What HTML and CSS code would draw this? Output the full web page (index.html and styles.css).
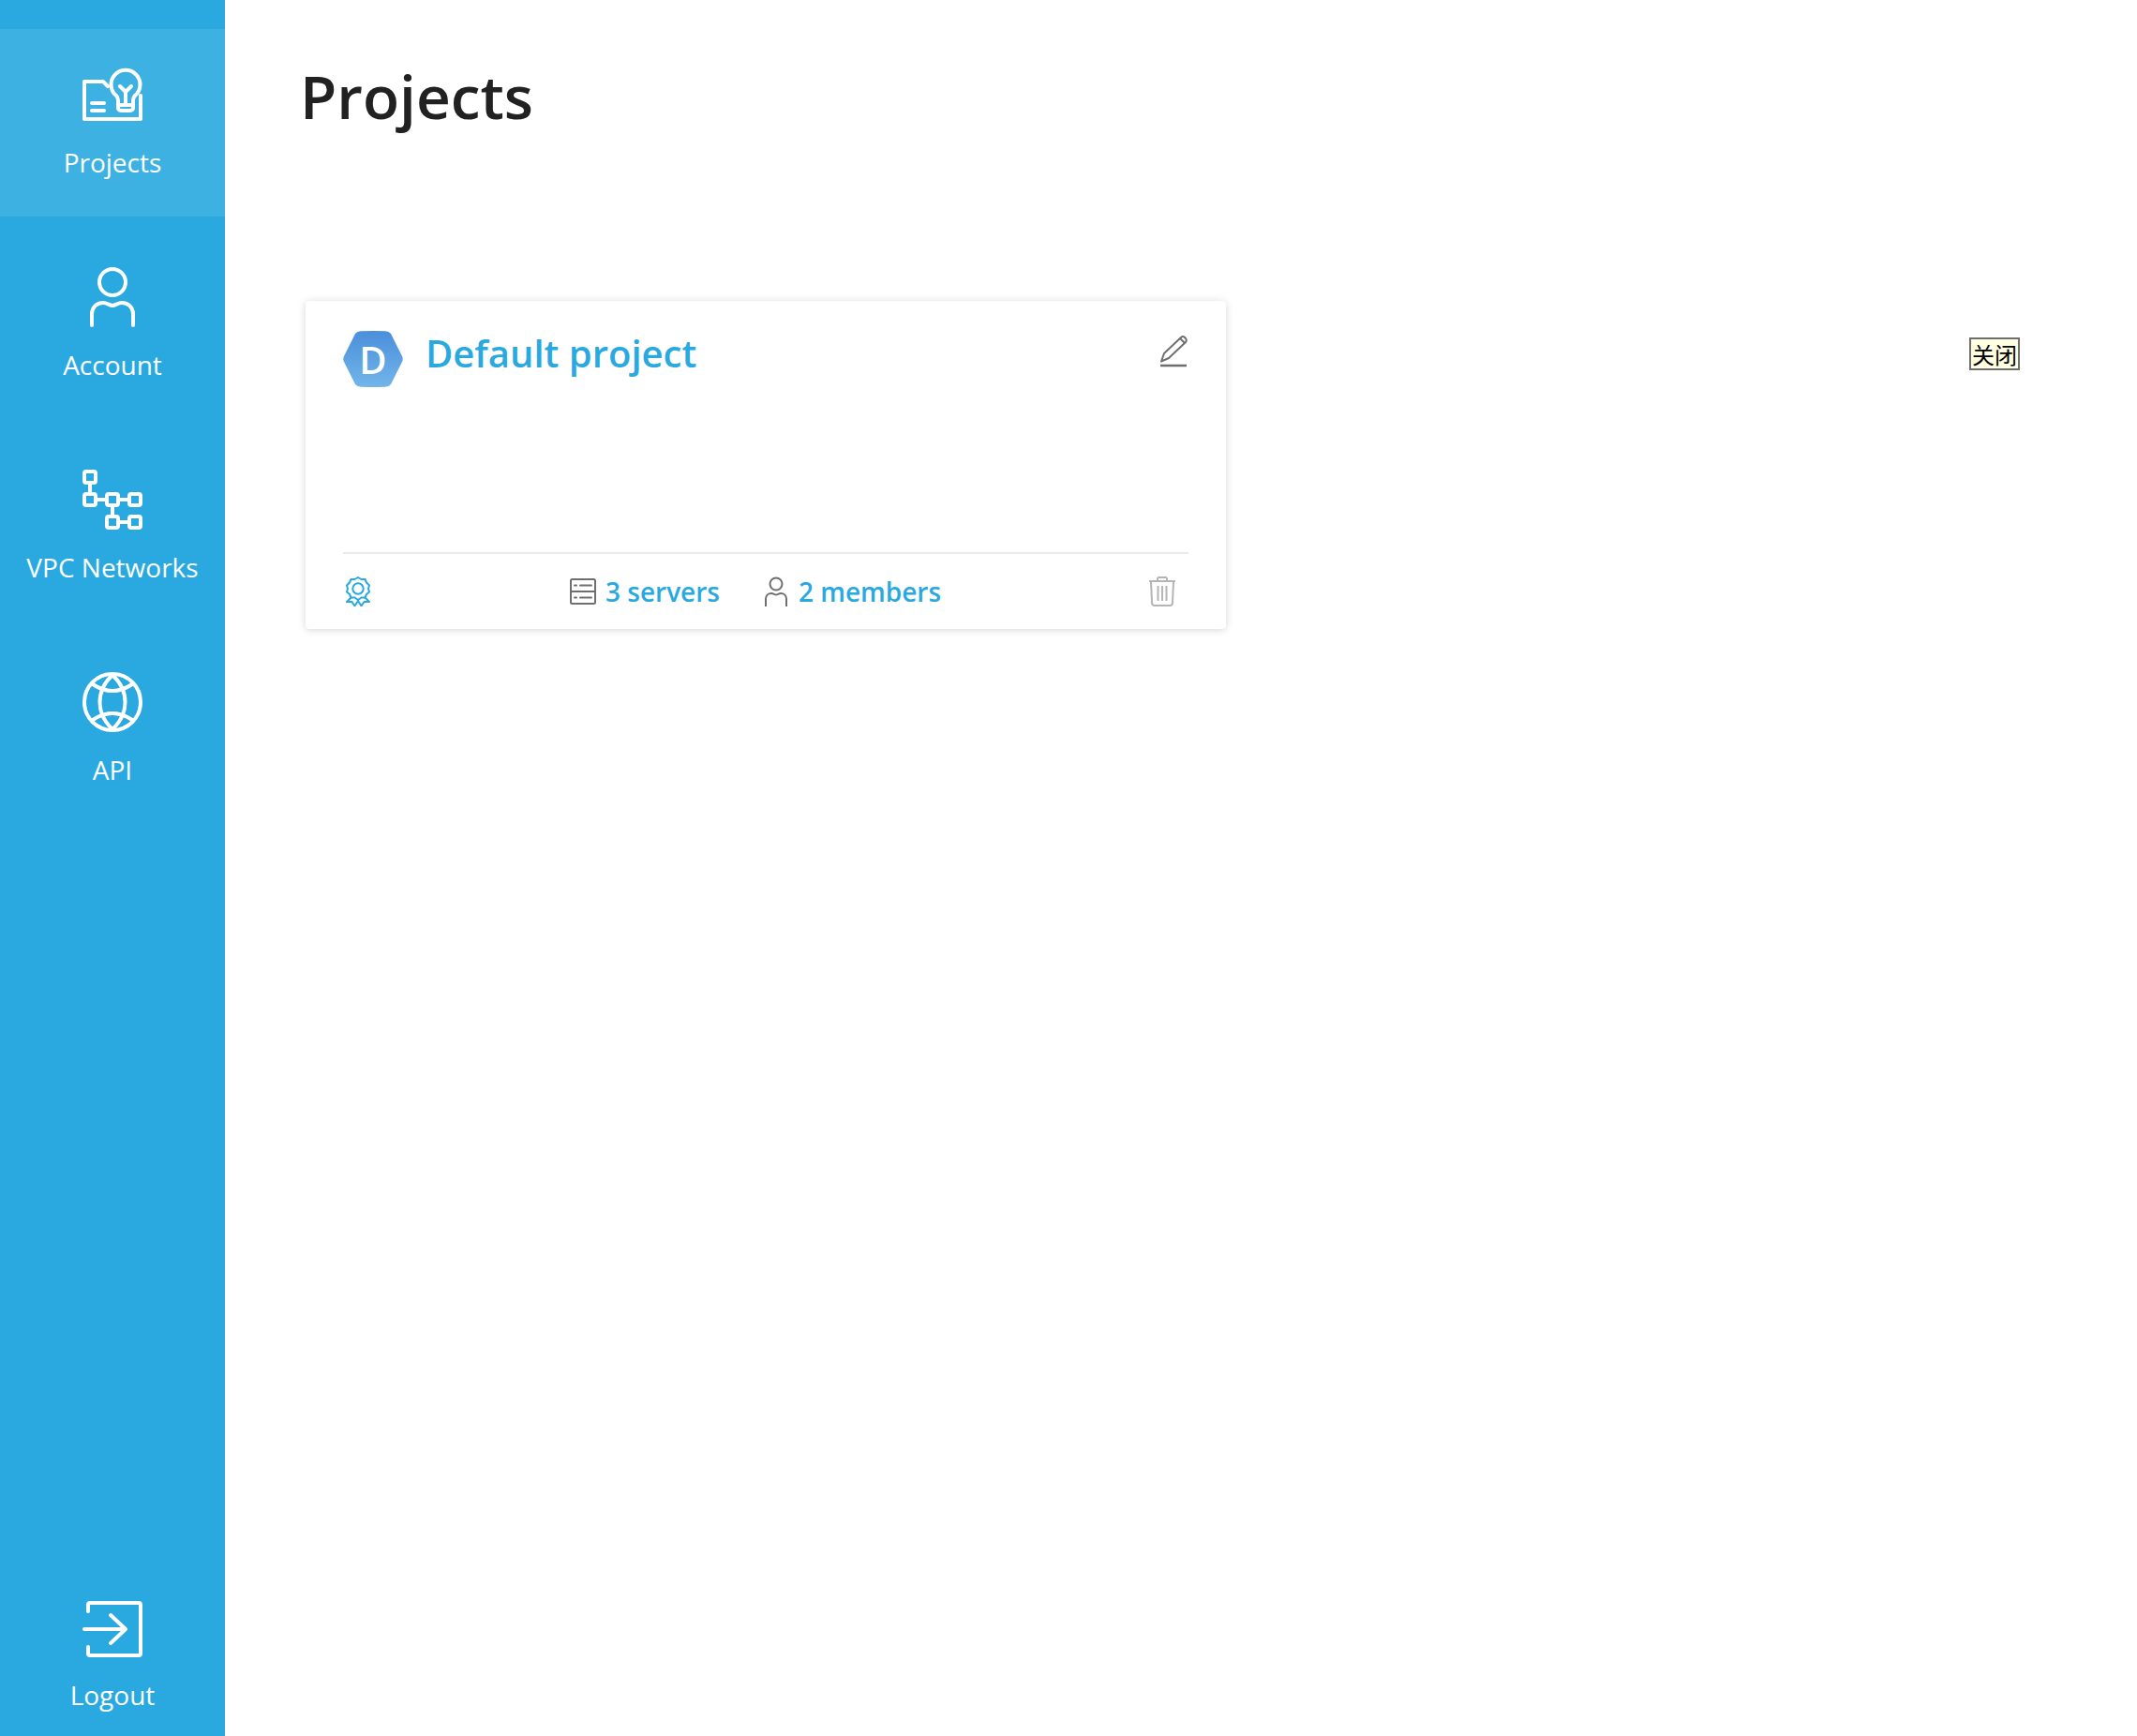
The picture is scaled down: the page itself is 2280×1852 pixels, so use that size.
FILE: index.html
```html
<!DOCTYPE html>
<html lang="en">
<head>
<meta charset="utf-8">
<title>Projects</title>
<link rel="stylesheet" href="styles.css">
</head>
<body>
<div class="app">
  <nav class="sidebar">
    <a class="nav-item is-active">
      <svg class="nav-icon" viewBox="0 0 64 64"><path d="M27 23L22 18H2V58H62V33"/><path d="M10 41H23M10 49H23"/><path d="M38 46V38Q38 35 36 33A15.500 15.500 0 1 1 56 33Q54 35 54 38V46a3 3 0 0 1-3 3H41a3 3 0 0 1-3-3Z"/><path d="M38 43H54M40 23L46 29L52 23M46 29V43"/></svg>
      <span class="nav-label">Projects</span>
    </a>
    <a class="nav-item">
      <svg class="nav-icon" viewBox="0 0 64 64"><circle cx="32" cy="16" r="14"/><path d="M10 62V50C10 43 15 38 22 38C26 38 29 41 32 41C35 41 38 38 42 38C49 38 54 43 54 50V62"/></svg>
      <span class="nav-label">Account</span>
    </a>
    <a class="nav-item">
      <svg class="nav-icon" viewBox="0 0 64 64"><rect x="2" y="2" width="12" height="12" rx="2"/><rect x="2" y="26" width="12" height="12" rx="2"/><rect x="26" y="26" width="12" height="12" rx="2"/><rect x="50" y="26" width="12" height="12" rx="2"/><rect x="26" y="50" width="12" height="12" rx="2"/><rect x="50" y="50" width="12" height="12" rx="2"/><path d="M8 14V26M14 32H26M38 32H50M32 38V50M38 56H50"/></svg>
      <span class="nav-label">VPC Networks</span>
    </a>
    <a class="nav-item">
      <svg class="nav-icon" viewBox="0 0 64 64"><circle cx="32" cy="32" r="30"/><path d="M32 3C14 20 14 44 32 61C50 44 50 20 32 3Z"/><path d="M11 13Q32 27 53 13M11 51Q32 37 53 51"/></svg>
      <span class="nav-label">API</span>
    </a>
    <a class="nav-item nav-item-bottom">
      <svg class="nav-icon" viewBox="0 0 64 64"><path d="M6 13V6a2 2 0 0 1 2-2H60a2 2 0 0 1 2 2V58a2 2 0 0 1-2 2H8a2 2 0 0 1-2-2V51"/><path d="M2 32H46M30 17L46 32L30 47"/></svg>
      <span class="nav-label">Logout</span>
    </a>
  </nav>
  <main class="main">
    <h1 class="page-title">Projects</h1>
    <section class="card">
      <header class="card-head">
        <svg class="hex" viewBox="0 0 64 60"><defs><linearGradient id="hexfill" x1="0" y1="0" x2="0" y2="1"><stop offset="0" stop-color="#4a8fdb"/><stop offset="1" stop-color="#72b5ea"/></linearGradient></defs><path d="M13 3Q15 .5 19 .3Q32 -.3 45 .3Q49 .5 51 3L63 27Q64.500 30 63 33L51 57Q49 59.500 45 59.700Q32 60.300 19 59.700Q15 59.500 13 57L1 33Q-.5 30 1 27Z" fill="url(#hexfill)"/></svg>
        <span class="hex-letter">D</span>
        <h2 class="card-title">Default project</h2>
        <svg class="edit-icon" viewBox="0 0 30 36"><path class="thin" d="M1 28.500L4 20L22 3Q24 1 26 3L27 4Q28.500 6 27 8L9 25Z"/><path class="thin" d="M21 4L26 9"/><path class="rule" d="M0 33H28"/></svg>
      </header>
      <footer class="card-foot">
        <svg class="badge-icon" viewBox="0 0 26 32"><path d="M13 1L16.500 3L20.500 3L22 6.500L25 9.500L24 13L25 16.500L22 19L20.500 22.500L16.500 22.500L13 25L9.500 22.500L5.500 22.500L4 19L1 16.500L2 13L1 9.500L4 6.500L5.500 3L9.500 3Z"/><circle cx="13" cy="13" r="5.700"/><path d="M6 22L1 27L6.500 27L9.500 31.500L13 26L16.500 31.500L19.500 27L25 27L20 22"/></svg>
        <div class="stats">
          <span class="stat">
            <svg class="stat-icon" viewBox="0 0 28 28"><rect x="1" y="1" width="26" height="26" rx="1.500"/><path d="M1 14H27M11 7.500H23M11 20.500H23M5 7.500H7M5 20.500H7"/></svg>
            3 servers
          </span>
          <span class="stat">
            <svg class="stat-icon stat-icon-person" viewBox="0 0 24 32"><circle cx="12" cy="8" r="6.500"/><path d="M1 32V24C1 20 4 18 7 18C9 18 10.500 19.500 12 19.500C13.500 19.500 15 18 17 18C20 18 23 20 23 24V32"/></svg>
            2 members
          </span>
        </div>
        <svg class="trash-icon" viewBox="0 0 28 32"><path d="M0 5H28M9 5V2.500Q9 1 10.500 1H17.500Q19 1 19 2.500V5M2 5L3 28Q3 31 6 31H22Q25 31 25 28L26 5M9.500 10V26M14 10V26M18.500 10V26"/></svg>
      </footer>
    </section>
    <button class="close-btn" type="button">关闭</button>
  </main>
</div>
</body>
</html>
```

FILE: styles.css
```css
* { box-sizing: border-box; }
html, body { margin: 0; height: 100%; background: #fff; }
body { font-family: "Open Sans", "Noto Sans CJK SC", sans-serif; }
.app { display: flex; height: 1852px; overflow: hidden; }

.sidebar {
  width: 240px;
  flex: none;
  display: flex;
  flex-direction: column;
  gap: 16px;
  padding-top: 31px;
  background: #29a9e0;
}
.nav-item {
  height: 200px;
  flex: none;
  padding-top: 38px;
  display: flex;
  flex-direction: column;
  align-items: center;
  color: #fff;
}
.nav-item.is-active { background: #3eb1e3; }
.nav-item-bottom { margin-top: auto; height: 184px; }
.nav-item-bottom .nav-label { margin-top: 19px; }
.nav-icon {
  width: 64px;
  height: 64px;
  fill: none;
  stroke: #fff;
  stroke-width: 4;
  stroke-linecap: round;
  stroke-linejoin: round;
}
.nav-label { font-size: 28px; line-height: 38px; margin-top: 21px; white-space: nowrap; }

.main { position: relative; flex: 1; padding: 62px 0 0 80px; }
.page-title {
  margin: 0 0 177px;
  font-size: 64px;
  line-height: 82px;
  font-weight: 600;
  color: #212121;
}
.card {
  margin-left: 6px;
  width: 982px;
  height: 350px;
  padding: 32px 40px 0;
  border-radius: 4px;
  background: #fff;
  box-shadow: 0 1px 8px rgba(0, 0, 0, .16);
  display: flex;
  flex-direction: column;
}
.card-head { position: relative; display: flex; align-items: flex-start; height: 238px; flex: none; border-bottom: 2px solid #ebebeb; }
.hex { width: 64px; height: 60px; flex: none; }
.hex-letter {
  position: absolute;
  left: 0;
  top: 1px;
  width: 64px;
  text-align: center;
  color: #fff;
  font-size: 40px;
  line-height: 60px;
  font-weight: 600;
}
.card-title {
  margin: -3px 0 0 24px;
  flex: 1;
  font-size: 40px;
  line-height: 54px;
  font-weight: 600;
  color: #29a9e0;
}
.edit-icon { width: 30px; height: 36px; margin-top: 4px; flex: none; fill: none; stroke: #6f6f6f; }
.thin { stroke-width: 2; stroke-linejoin: round; }
.rule { stroke-width: 2.500; }

.card-foot { display: flex; align-items: center; height: 80px; }
.badge-icon { width: 26px; height: 32px; margin-left: 3px; flex: none; fill: none; stroke: #29a9e0; stroke-width: 2; stroke-linejoin: round; }
.stats { display: flex; align-items: center; gap: 48px; margin-left: 213px; }
.stat { display: flex; align-items: center; gap: 10px; font-size: 28px; font-weight: 600; color: #29a9e0; white-space: nowrap; }
.stat-icon { width: 28px; height: 28px; flex: none; fill: none; stroke: #6f6f6f; stroke-width: 2; stroke-linecap: round; }
.stat-icon-person { width: 24px; height: 32px; margin-right: 2px; stroke-linecap: butt; }
.trash-icon { width: 28px; height: 32px; margin-left: auto; margin-right: 14px; flex: none; fill: none; stroke: #b5b5b5; stroke-width: 2; }

.close-btn {
  position: absolute;
  left: 1861px;
  top: 360px;
  width: 54px;
  height: 35px;
  padding: 0;
  border: 2px solid #6e6e6e;
  background: #ffffe1;
  color: #000;
  font-family: "Noto Sans CJK SC", sans-serif;
  font-size: 24px;
  line-height: 30px;
}
```
